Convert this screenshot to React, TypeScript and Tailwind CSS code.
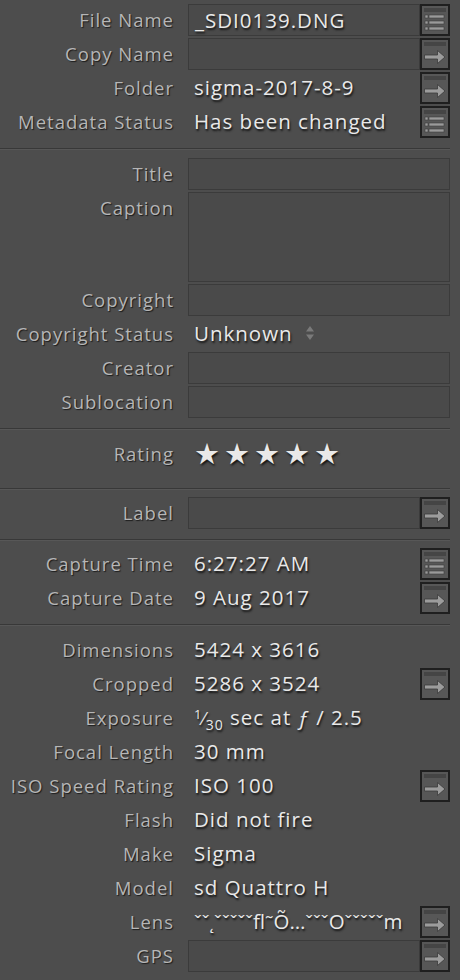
import React from 'react'

type Kind = 'list' | 'arrow' | null

function SideButton({ kind }: { kind: Kind }) {
  if (!kind) return null
  return (
    <div className="flex h-[32px] w-[30px] shrink-0 flex-col border-2 border-[#1f1f1f] bg-[#575757]">
      <div className="mx-[2px] mt-[2px] h-[4px] bg-[#454545]" />
      <svg width="26" height="22" viewBox="0 0 26 22" className="block">
        {kind === 'list' ? (
          <g fill="#9a9a9a" stroke="#3c3c3c" strokeWidth="0.6">
            <rect x="3" y="3" width="3" height="3" />
            <rect x="7" y="3" width="15" height="3" />
            <rect x="3" y="9" width="3" height="3" />
            <rect x="7" y="9" width="15" height="3" />
            <rect x="3" y="15" width="3" height="3" />
            <rect x="7" y="15" width="15" height="3" />
          </g>
        ) : (
          <path
            d="M2.5 9 H15.5 V4.5 L23 11 L15.5 17.5 V13 H2.5 Z"
            fill="#9c9c9c"
            stroke="#3a3a3a"
            strokeWidth="0.8"
          />
        )}
      </svg>
    </div>
  )
}

interface RowProps {
  label: string
  value?: React.ReactNode
  field?: boolean
  button?: Kind
  height?: string
  tight?: boolean
}

function Row({ label, value, field, button = null, height = 'h-[32px]', tight }: RowProps) {
  return (
    <div className={`flex ${height} items-start`}>
      <div className="flex h-[32px] w-[174px] shrink-0 items-center justify-end whitespace-nowrap text-[18.5px] tracking-[1px] text-[#b6b6b6] [text-shadow:1px_1px_1px_#1c1c1c]">
        {label}
      </div>
      <div className="ml-[14px] flex h-full min-w-0 flex-1 items-start">
        <div
          className={`flex h-full min-w-0 flex-1 items-start pl-[6px] ${
            field ? 'border border-[#3b3b3b] bg-[#4a4a4a]' : ''
          }`}
        >
          {value && (
            <div
              className={`flex h-[30px] items-center whitespace-nowrap text-[20.5px] text-[#e9e9e9] [text-shadow:1px_2px_2px_#141414] ${
                tight ? 'tracking-[0px]' : 'tracking-[1px]'
              }`}
            >
              {value}
            </div>
          )}
        </div>
        <SideButton kind={button} />
      </div>
    </div>
  )
}

function Separator() {
  return (
    <div>
      <div className="h-px bg-[#383838]" />
      <div className="h-px bg-[#575757]" />
    </div>
  )
}

function Stars() {
  return (
    <div className="flex items-center gap-[4px] tracking-[0px]">
      {[0, 1, 2, 3, 4].map((i) => (
        <span key={i} className="text-[29px] leading-[30px]">
          ★
        </span>
      ))}
    </div>
  )
}

export default function App() {
  return (
    <div className="h-[980px] w-[460px] overflow-hidden bg-[#4d4d4d] pr-[10px] font-['Open_Sans',sans-serif]">
      <section className="flex flex-col gap-[2px] pb-[10px] pt-[4px]">
        <Row label="File Name" value="_SDI0139.DNG" field button="list" />
        <Row label="Copy Name" field button="arrow" />
        <Row label="Folder" value="sigma-2017-8-9" button="arrow" />
        <Row label="Metadata Status" value="Has been changed" button="list" />
      </section>
      <Separator />

      <section className="flex flex-col gap-[2px] pb-[10px] pt-[8px]">
        <Row label="Title" field />
        <Row label="Caption" field height="h-[90px]" />
        <Row label="Copyright" field />
        <Row
          label="Copyright Status"
          value={
            <span className="flex items-center">
              Unknown
              <svg width="10" height="16" viewBox="0 0 10 16" className="ml-[12px]">
                <path d="M5 1 L9 6.5 H1 Z M5 15 L9 9.5 H1 Z" fill="#7a7a7a" />
              </svg>
            </span>
          }
        />
        <Row label="Creator" field />
        <Row label="Sublocation" field />
      </section>
      <Separator />

      <section className="pb-[18px] pt-[8px]">
        <Row label="Rating" value={<Stars />} />
      </section>
      <Separator />

      <section className="pb-[10px] pt-[7px]">
        <Row label="Label" field button="arrow" />
      </section>
      <Separator />

      <section className="flex flex-col gap-[2px] pb-[10px] pt-[7px]">
        <Row label="Capture Time" value="6:27:27 AM" button="list" />
        <Row label="Capture Date" value="9 Aug 2017" button="arrow" />
      </section>
      <Separator />

      <section className="flex flex-col gap-[2px] pb-[8px] pt-[8px]">
        <Row label="Dimensions" value="5424 x 3616" />
        <Row label="Cropped" value="5286 x 3524" button="arrow" />
        <Row
          label="Exposure"
          value={
            <span>
              <span className="relative top-[-6px] text-[13px]">1</span>
              <span className="text-[18px]">⁄</span>
              <span className="relative top-[5px] text-[14px]">30</span> sec at{' '}
              <span className="italic">ƒ</span> / 2.5
            </span>
          }
        />
        <Row label="Focal Length" value="30 mm" />
        <Row label="ISO Speed Rating" value="ISO 100" button="arrow" />
        <Row label="Flash" value="Did not fire" />
        <Row label="Make" value="Sigma" />
        <Row label="Model" value="sd Quattro H" />
        <Row
          label="Lens"
          tight
          value={
            <span>
              <span className="text-[19px]">ˇˇ˛ˇˇˇˇˇ</span>fl
              <span className="text-[19px]">˜</span>Õ…
              <span className="text-[19px]">ˇˇˇ</span>O
              <span className="text-[19px]">ˇˇˇˇˇ</span>m
            </span>
          }
          button="arrow"
        />
        <Row label="GPS" field button="arrow" />
      </section>
    </div>
  )
}
